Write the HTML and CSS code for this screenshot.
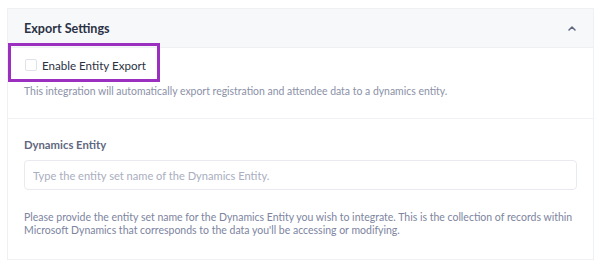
FILE: index.html
```html
<!DOCTYPE html>
<html lang="en">

<head>
  <meta charset="UTF-8">
  <meta name="viewport" content="width=device-width, initial-scale=1.0">
  <title>Export Settings</title>
  <link rel="stylesheet" href="styles.css">
</head>

<body>
  <div class="card">
    <div class="card-head">
      <span class="card-title">Export Settings</span>
      <svg class="chevron" width="8" height="5" viewBox="0 0 8 5">
        <path d="M1 4 L4 1 L7 4" fill="none" stroke="#5f6780" stroke-width="1.5" stroke-linecap="round" stroke-linejoin="round"/>
      </svg>
    </div>

    <div class="section first">
      <label class="check-row">
        <span class="checkbox"></span>
        <span>Enable Entity Export</span>
      </label>
      <p class="desc">This integration will automatically export registration and attendee data to a dynamics entity.</p>
      <div class="highlight"></div>
    </div>

    <div class="section">
      <label class="field-label" for="entity">Dynamics Entity</label>
      <input class="field-input" type="text" id="entity" placeholder="Type the entity set name of the Dynamics Entity.">
      <p class="help">Please provide the entity set name for the Dynamics Entity you wish to integrate. This is the collection of records within Microsoft Dynamics that corresponds to the data you'll be accessing or modifying.</p>
    </div>
  </div>
</body>

</html>
```

FILE: styles.css
```css
* {
  box-sizing: border-box;
  font-family: 'Lato', 'Noto Sans', sans-serif;
}

body {
  margin: 0;
  background-color: #fff;
}

.card {
  margin: 8px 6px 0 7px;
  border: 1px solid #eef0f4;
  border-bottom: none;
}

.card-head {
  display: flex;
  align-items: center;
  justify-content: space-between;
  height: 39px;
  padding: 0 16px 0 16px;
  background-color: #f7f8fa;
  border-bottom: 1px solid #eef0f4;
}

.card-title {
  font-size: 12.6px;
  font-weight: 700;
  color: #2b3245;
}

.chevron {
  margin-right: 1px;
}

.section {
  position: relative;
  padding: 18px 16px 22px;
  border-bottom: 1px solid #f0f1f4;
}

.section.first {
  padding: 8px 16px 19px;
}

.check-row {
  display: flex;
  align-items: center;
  gap: 5px;
  height: 18px;
  font-size: 11.6px;
  color: #2b3142;
}

.checkbox {
  width: 12px;
  height: 12px;
  margin-left: 1px;
  border: 1px solid #dfe2e8;
  border-radius: 2px;
  background-color: #fff;
}

.desc {
  margin: 9px 0 0;
  font-size: 10.45px;
  line-height: 16px;
  color: #8b91a7;
}

.highlight {
  position: absolute;
  left: 0;
  top: -5px;
  width: 152px;
  height: 39px;
  border: 3px solid #9b2fc0;
}

.field-label {
  display: block;
  font-size: 11.3px;
  font-weight: 700;
  line-height: 16px;
  color: #5f6780;
}

.field-input {
  display: block;
  width: 100%;
  height: 30px;
  margin-top: 7px;
  padding: 0 8px;
  border: 1px solid #e8eaef;
  border-radius: 4px;
  font-size: 11.1px;
  color: #2f3547;
  outline: none;
}

.field-input::placeholder {
  color: #a9aec0;
}

.help {
  margin: 21px 0 0;
  font-size: 10.5px;
  line-height: 13px;
  color: #7d84a0;
}
```
